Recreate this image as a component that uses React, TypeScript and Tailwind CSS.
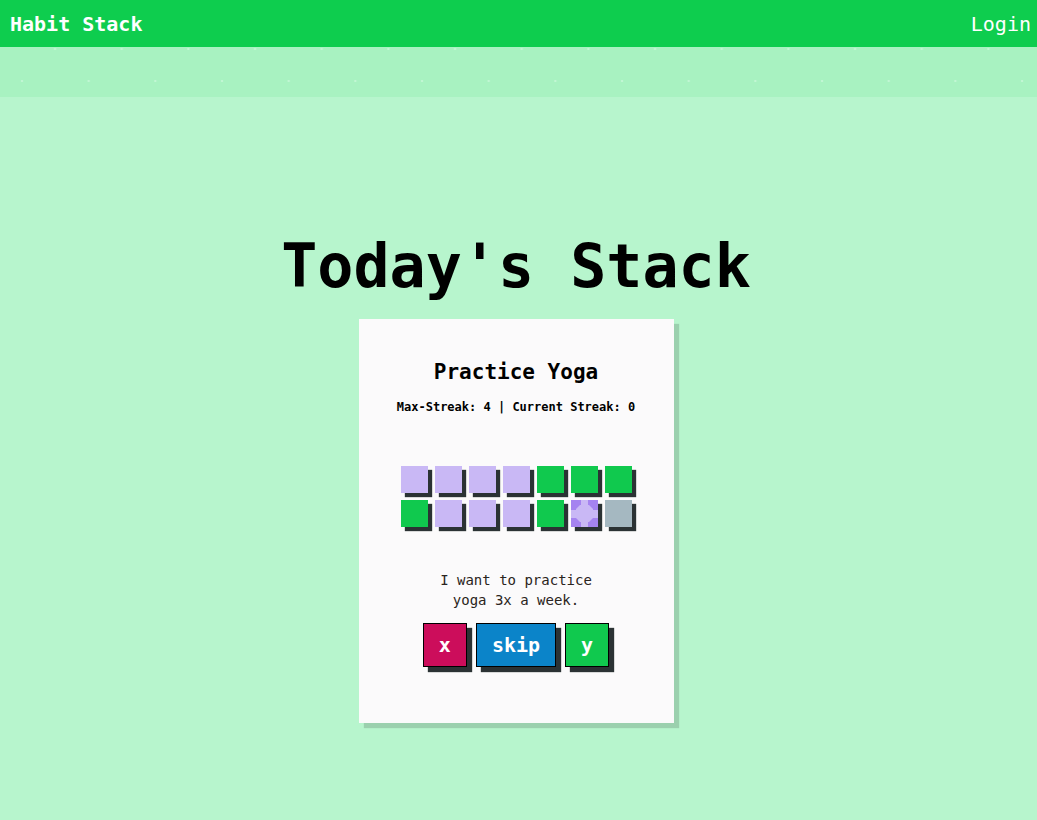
import React from 'react';

type Cell = 'miss' | 'done' | 'today' | 'future';

const cells: Cell[] = [
  'miss', 'miss', 'miss', 'miss', 'done', 'done', 'done',
  'done', 'miss', 'miss', 'miss', 'done', 'today', 'future',
];

const cellClass: Record<Cell, string> = {
  miss: 'bg-[#c9b8f5]',
  done: 'bg-[#10c94e]',
  today: 'bg-[#a583f0]',
  future: 'bg-[#a5b8c1]',
};

const TodayMark = () => (
  <svg width="27" height="27" viewBox="0 0 27 27" className="block">
    <rect x="0" y="0" width="27" height="27" fill="#a583f0" />
    <rect x="0" y="10" width="27" height="8" fill="#c9b8f5" />
    <rect x="10" y="0" width="7" height="27" fill="#c9b8f5" />
    <polygon points="9,5 18,5 22,9 22,18 18,22 9,22 5,18 5,9" fill="#c9b8f5" />
  </svg>
);

const DotBand = () => (
  <div className="h-[50px] w-full bg-[#a8f2c1]">
    <svg width="100%" height="50" className="block">
      <defs>
        <pattern id="dots" x="0" y="0" width="66.67" height="66" patternUnits="userSpaceOnUse">
          <rect x="54" y="1" width="2" height="2" fill="#c3f7d5" />
          <rect x="21" y="33" width="2" height="2" fill="#c3f7d5" />
        </pattern>
      </defs>
      <rect x="0" y="0" width="100%" height="50" fill="url(#dots)" />
    </svg>
  </div>
);

const App = () => {
  return (
    <div className="min-h-[820px] w-full bg-[#b7f5cd] font-['DejaVu_Sans_Mono','Liberation_Mono',monospace]">
      {/* Top bar */}
      <header className="h-[47px] bg-[#0ecd4e] flex items-center justify-between pl-[10px] pr-[6px] text-white text-[20px]">
        <span className="font-bold">Habit Stack</span>
        <span>Login</span>
      </header>
      <DotBand />

      <main className="flex flex-col items-center pr-[5px]">
        <h1 className="mt-[139px] text-[60px] leading-[60px] font-bold text-black">Today's Stack</h1>

        {/* Habit card */}
        <div className="mt-[23px] w-[315px] h-[404px] bg-[#fbfafb] shadow-[5px_5px_1px_rgba(0,0,0,0.15)] flex flex-col items-center pt-[39px]">
          <h2 className="text-[21px] leading-[28px] font-bold text-black">Practice Yoga</h2>
          <p className="mt-[13px] text-[12px] leading-[16px] font-bold text-black">
            Max-Streak: 4 | Current Streak: 0
          </p>

          <div className="mt-[51px] grid grid-cols-7 gap-[7px]">
            {cells.map((c, i) => (
              <div key={i} className={`w-[27px] h-[27px] shadow-[4px_4px_1px_#2b3234] ${cellClass[c]}`}>
                {c === 'today' && <TodayMark />}
              </div>
            ))}
          </div>

          <p className="mt-[43px] w-[170px] text-center text-[14px] leading-[20px] text-[#2a2420]">
            I want to practice yoga 3x a week.
          </p>

          <div className="mt-[13px] flex gap-[9px]">
            <button className="border border-black bg-[#cc0d5b] text-white font-bold text-[20px] leading-[28px] px-[15px] py-[7px] shadow-[5px_5px_1px_#2b3234]">
              x
            </button>
            <button className="border border-black bg-[#0b84c9] text-white font-bold text-[20px] leading-[28px] px-[15px] py-[7px] shadow-[5px_5px_1px_#2b3234]">
              skip
            </button>
            <button className="border border-black bg-[#10c94e] text-white font-bold text-[20px] leading-[28px] px-[15px] py-[7px] shadow-[5px_5px_1px_#2b3234]">
              y
            </button>
          </div>
        </div>
      </main>
    </div>
  );
};

export default App;
